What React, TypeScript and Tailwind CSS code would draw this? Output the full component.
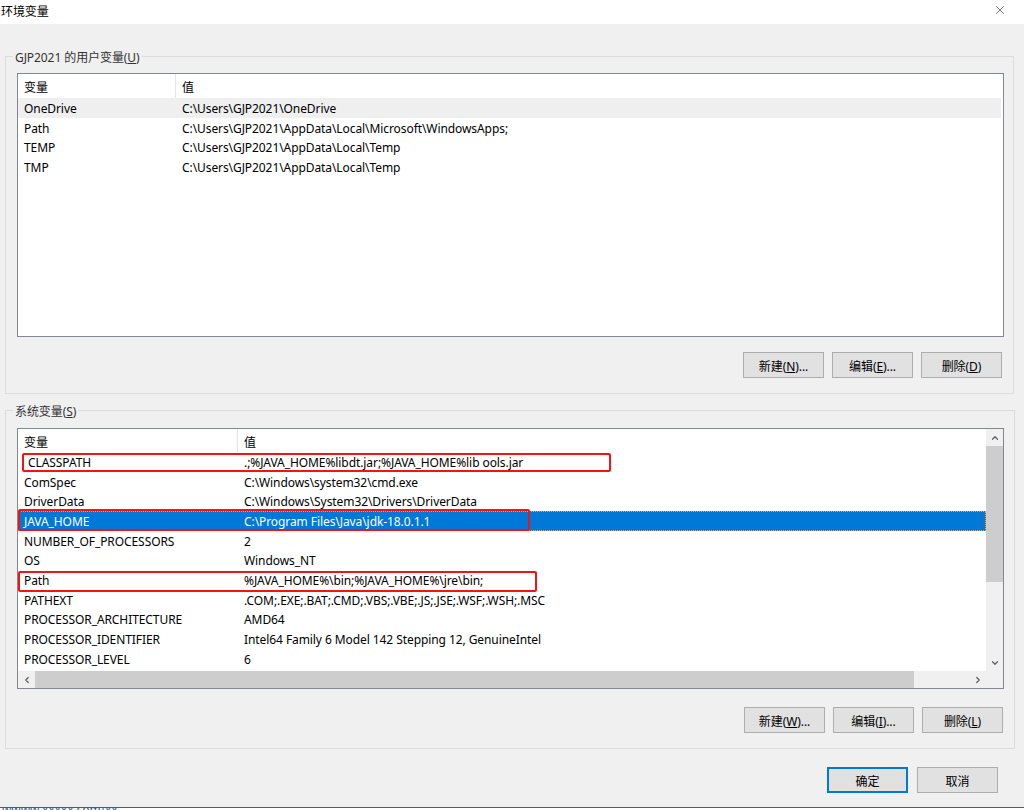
import { X, ChevronUp, ChevronDown, ChevronLeft, ChevronRight } from 'lucide-react';

const userVars: [string, string][] = [
  ['OneDrive', 'C:\\Users\\GJP2021\\OneDrive'],
  ['Path', 'C:\\Users\\GJP2021\\AppData\\Local\\Microsoft\\WindowsApps;'],
  ['TEMP', 'C:\\Users\\GJP2021\\AppData\\Local\\Temp'],
  ['TMP', 'C:\\Users\\GJP2021\\AppData\\Local\\Temp'],
];

const systemVars: [string, string][] = [
  ['CLASSPATH', '.;%JAVA_HOME%libdt.jar;%JAVA_HOME%lib ools.jar'],
  ['ComSpec', 'C:\\Windows\\system32\\cmd.exe'],
  ['DriverData', 'C:\\Windows\\System32\\Drivers\\DriverData'],
  ['JAVA_HOME', 'C:\\Program Files\\Java\\jdk-18.0.1.1'],
  ['NUMBER_OF_PROCESSORS', '2'],
  ['OS', 'Windows_NT'],
  ['Path', '%JAVA_HOME%\\bin;%JAVA_HOME%\\jre\\bin;'],
  ['PATHEXT', '.COM;.EXE;.BAT;.CMD;.VBS;.VBE;.JS;.JSE;.WSF;.WSH;.MSC'],
  ['PROCESSOR_ARCHITECTURE', 'AMD64'],
  ['PROCESSOR_IDENTIFIER', 'Intel64 Family 6 Model 142 Stepping 12, GenuineIntel'],
  ['PROCESSOR_LEVEL', '6'],
];

function Btn({ label, keyChar, dots, primary }: { label: string; keyChar?: string; dots?: boolean; primary?: boolean }) {
  return (
    <button
      className={`w-[81px] h-[26px] pt-[4px] bg-[#e1e1e1] text-[12px] text-black flex items-center justify-center ${
        primary ? 'border-2 border-[#0078d7]' : 'border border-[#adadad]'
      }`}
    >
      {label}
      {keyChar && (
        <>
          (<span className="underline">{keyChar}</span>)
        </>
      )}
      {dots && '...'}
    </button>
  );
}

export default function App() {
  return (
    <div className="w-[1024px] h-[810px] bg-[#f0f0f0] flex flex-col overflow-hidden text-[12px] tracking-[-0.08px] text-black font-[family-name:'Noto_Sans','Noto_Sans_CJK_SC',sans-serif]">
      {/* Title bar */}
      <div className="h-6 bg-white flex items-center justify-between pl-[1px] pr-[17px]">
        <span className="leading-none -mt-[1px]">环境变量</span>
        <X className="w-[14px] h-[14px] text-[#333] -mt-[4px]" strokeWidth={1.2} />
      </div>

      {/* User variables */}
      <div className="relative ml-[5px] mt-[32px] w-[1009px] h-[338px] border border-[#dcdcdc] px-[11px] pt-[16px] flex flex-col">
        <span className="absolute -top-[7px] left-[7px] bg-[#f0f0f0] px-[2px] leading-[16px] text-[#333]">
          GJP2021 的用户变量(<span className="underline">U</span>)
        </span>
        <div className="w-[987px] h-[264px] bg-white border border-[#828790] flex flex-col">
          <div className="h-[24px] flex items-stretch shrink-0">
            <div className="w-[158px] pl-[6px] pt-[4px] flex items-center border-r border-[#e5e5e5]">变量</div>
            <div className="pl-[6px] pt-[4px] flex items-center">值</div>
          </div>
          {userVars.map(([k, v], i) => (
            <div key={k} className={`h-[19.7px] pt-[2px] flex items-center shrink-0 mr-[2px] ${i === 0 ? 'bg-[#efefef]' : ''}`}>
              <div className="w-[158px] pl-[6px]">{k}</div>
              <div className="pl-[6px]">{v}</div>
            </div>
          ))}
        </div>
        <div className="flex justify-end gap-[8px] mt-[15px]">
          <Btn label="新建" keyChar="N" dots />
          <Btn label="编辑" keyChar="E" dots />
          <Btn label="删除" keyChar="D" />
        </div>
      </div>

      {/* System variables */}
      <div className="relative ml-[5px] mt-[16px] w-[1010px] h-[339px] border border-[#dcdcdc] px-[11px] pt-[17px] flex flex-col">
        <span className="absolute -top-[7px] left-[7px] bg-[#f0f0f0] px-[2px] leading-[16px] text-[#333]">
          系统变量(<span className="underline">S</span>)
        </span>
        <div className="relative w-[987px] h-[261px] bg-white border border-[#828790] flex">
          <div className="flex-1 flex flex-col min-w-0">
            <div className="flex-1 overflow-hidden">
              <div className="h-[23px] flex items-stretch">
                <div className="w-[220px] pl-[6px] pt-[4px] flex items-center border-r border-[#e5e5e5]">变量</div>
                <div className="pl-[6px] pt-[4px] flex items-center">值</div>
              </div>
              {systemVars.map(([k, v]) => {
                const sel = k === 'JAVA_HOME';
                return (
                  <div
                    key={k}
                    className={`h-[19.7px] pt-[2px] flex items-center ${
                      sel ? 'bg-[#0078d7] text-white outline-1 outline-dotted outline-[#f5a35a] -outline-offset-1' : ''
                    }`}
                  >
                    <div className={`w-[220px] ${k === 'CLASSPATH' ? 'pl-[10px]' : 'pl-[6px]'}`}>{k}</div>
                    <div className="pl-[6px] whitespace-nowrap">{v}</div>
                  </div>
                );
              })}
            </div>
            {/* horizontal scrollbar */}
            <div className="h-[17px] bg-[#f0f0f0] flex items-center shrink-0">
              <div className="w-[17px] flex justify-center">
                <ChevronLeft className="w-[10px] h-[10px] text-[#606060]" strokeWidth={3} />
              </div>
              <div className="w-[879px] h-full bg-[#cdcdcd]" />
              <div className="flex-1" />
              <div className="w-[17px] flex justify-center">
                <ChevronRight className="w-[10px] h-[10px] text-[#606060]" strokeWidth={3} />
              </div>
            </div>
          </div>
          {/* vertical scrollbar */}
          <div className="w-[17px] bg-[#f0f0f0] flex flex-col items-center shrink-0">
            <div className="h-[17px] flex items-center">
              <ChevronUp className="w-[10px] h-[10px] text-[#606060]" strokeWidth={3} />
            </div>
            <div className="w-full h-[136px] bg-[#cdcdcd]" />
            <div className="flex-1" />
            <div className="h-[17px] flex items-center">
              <ChevronDown className="w-[10px] h-[10px] text-[#606060]" strokeWidth={3} />
            </div>
            <div className="h-[17px]" />
          </div>

          {/* red annotation boxes */}
          <div className="absolute left-[4px] top-[24px] w-[589px] h-[19px] border-2 border-[#f01414] rounded-[2px]" />
          <div className="absolute left-0 top-[80px] w-[512px] h-[22px] border-2 border-[#f01414] rounded-[2px]" />
          <div className="absolute left-0 top-[142px] w-[519px] h-[21px] border-2 border-[#f01414] rounded-[2px]" />
        </div>
        <div className="flex justify-end gap-[8px] mt-[18px]">
          <Btn label="新建" keyChar="W" dots />
          <Btn label="编辑" keyChar="I" dots />
          <Btn label="删除" keyChar="L" />
        </div>
      </div>

      {/* Dialog buttons */}
      <div className="flex justify-end gap-[9px] mt-[18px] pr-[26px]">
        <Btn label="确定" primary />
        <Btn label="取消" />
      </div>

      <div className="flex-1" />
      <div className="h-[3px] border-t border-[#5a5a5a] bg-white overflow-hidden">
        <span className="block text-[#1a5fa8] text-[12px] leading-[10px] -mt-[3px] pl-[2px]">wwww.xxxxx.com/xx</span>
      </div>
    </div>
  );
}
